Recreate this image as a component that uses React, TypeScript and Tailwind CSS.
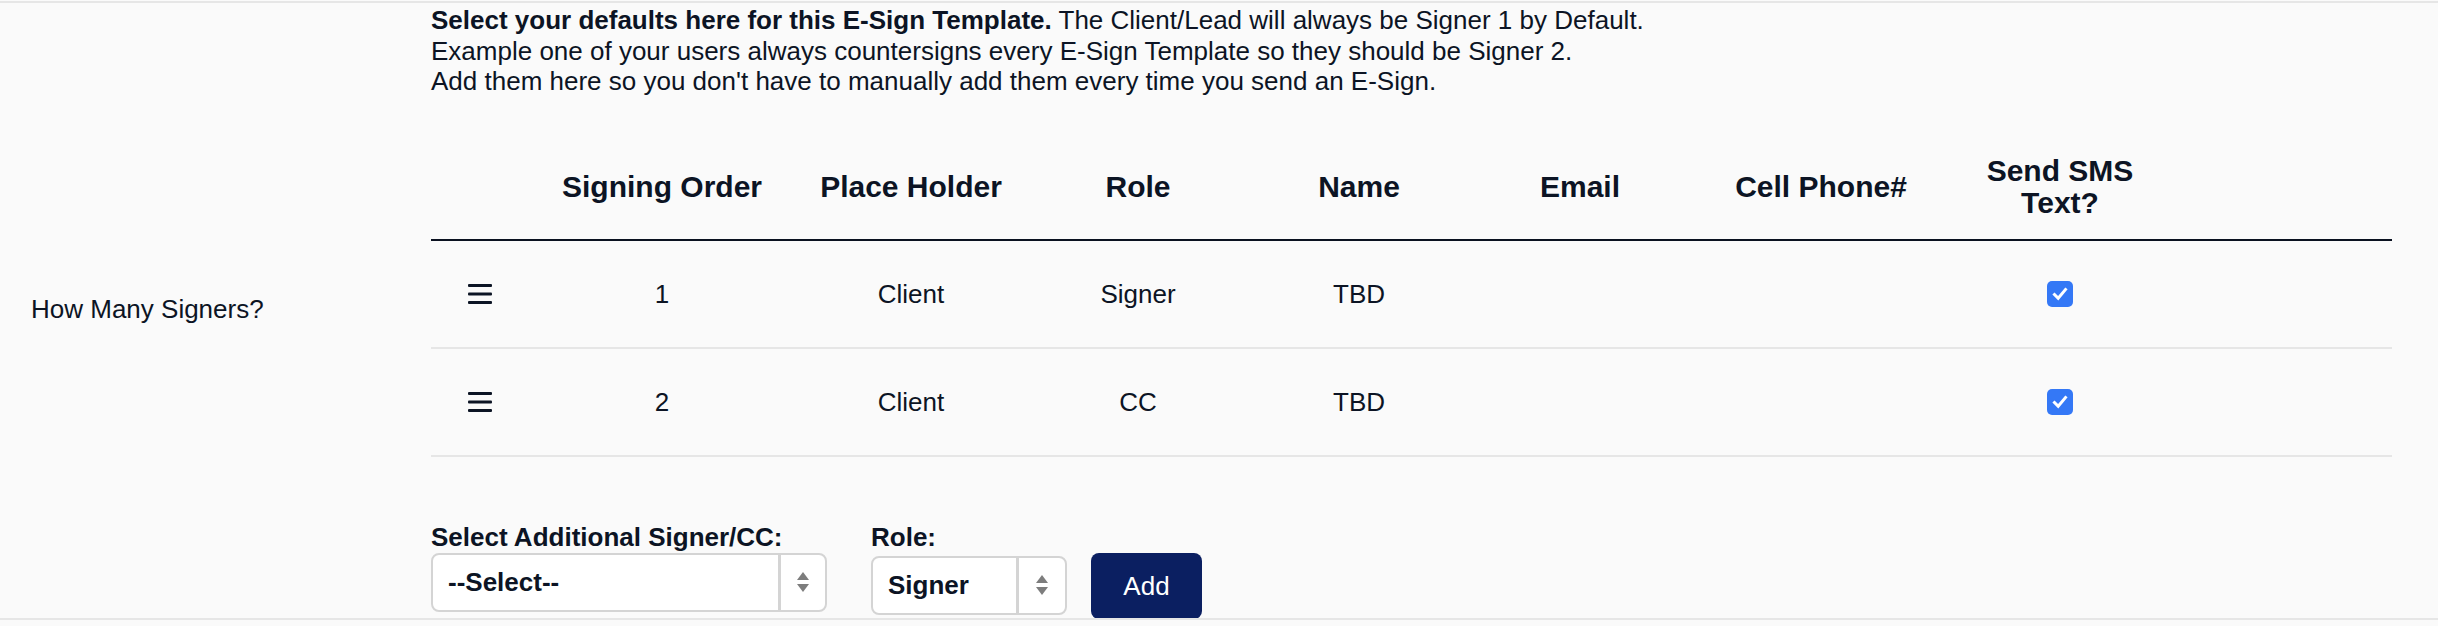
import React from "react";

const TEXT = "text-[#0c1424]";

function DragIcon() {
  return (
    <svg width="24" height="20" viewBox="0 0 24 20" aria-hidden="true">
      <rect x="0" y="0" width="24" height="3" rx="1" fill="#0c1424" />
      <rect x="0" y="8.5" width="24" height="3" rx="1" fill="#0c1424" />
      <rect x="0" y="17" width="24" height="3" rx="1" fill="#0c1424" />
    </svg>
  );
}

function CheckBox() {
  return (
    <div className="w-[26px] h-[26px] rounded-[5px] bg-[#3478f6] flex items-center justify-center">
      <svg width="18" height="18" viewBox="0 0 18 18" aria-hidden="true">
        <path d="M3.5 9.5 L7.2 13.2 L14.5 4.5" stroke="#ffffff" strokeWidth="3" fill="none" strokeLinecap="square" />
      </svg>
    </div>
  );
}

function Arrows() {
  return (
    <svg width="14" height="26" viewBox="0 0 14 26" aria-hidden="true">
      <path d="M7 3 L13 11 L1 11 Z" fill="#7d7d7d" />
      <path d="M7 23 L13 15 L1 15 Z" fill="#7d7d7d" />
    </svg>
  );
}

function FakeSelect({ label, width, right }: { label: string; width: string; right: string }) {
  return (
    <div className={`${width} h-[59px] bg-white border-2 border-[#d4d4d4] rounded-[8px] flex items-stretch`}>
      <div className={`flex-1 flex items-center pl-[15px] font-bold text-[26px] ${TEXT}`}>{label}</div>
      <div className={`${right} border-l-[3px] border-[#d4d4d4] flex items-center justify-center`}>
        <Arrows />
      </div>
    </div>
  );
}

const cols = "grid grid-cols-[98px_266px_232px_222px_220px_222px_260px_218px_1fr]";

const rows = [
  { order: "1", place: "Client", role: "Signer", name: "TBD" },
  { order: "2", place: "Client", role: "CC", name: "TBD" },
];

export default function App() {
  return (
    <div
      className={`w-[2438px] h-[626px] bg-[#fafafa] ${TEXT} text-[26px] leading-[30px] pt-px`}
      style={{ fontFamily: '"Liberation Sans", Arial, Helvetica, sans-serif' }}
    >
      <div className="border-t-2 border-b-2 border-[#e6e6e6] flex h-[619px] overflow-hidden">
        <div className="w-[431px] shrink-0 pl-[31px] flex items-center pb-[4px]">
          <span>How Many Signers?</span>
        </div>
        <div className="flex-1 pr-[46px] pt-[2px] flex flex-col">
          <p className="leading-[30.5px]">
            <span className="font-bold">Select your defaults here for this E-Sign Template.</span> The Client/Lead will
            always be Signer 1 by Default.
            <br />
            Example one of your users always countersigns every E-Sign Template so they should be Signer 2.
            <br />
            Add them here so you don't have to manually add them every time you send an E-Sign.
          </p>

          <div className="mt-[38px]">
            <div className={`${cols} h-[106px] items-center text-center font-bold text-[30px] leading-[32px] border-b-2 border-[#0a1120]`}>
              <div />
              <div>Signing Order</div>
              <div>Place Holder</div>
              <div>Role</div>
              <div>Name</div>
              <div>Email</div>
              <div>Cell Phone#</div>
              <div>
                Send SMS
                <br />
                Text?
              </div>
              <div />
            </div>
            {rows.map((r) => (
              <div key={r.order} className={`${cols} h-[108px] items-center text-center border-b-2 border-[#e6e6e6]`}>
                <div className="flex justify-center">
                  <DragIcon />
                </div>
                <div>{r.order}</div>
                <div>{r.place}</div>
                <div>{r.role}</div>
                <div>{r.name}</div>
                <div />
                <div />
                <div className="flex justify-center">
                  <CheckBox />
                </div>
                <div />
              </div>
            ))}
          </div>

          <div className="mt-[65px] flex items-start">
            <div className="flex flex-col">
              <label className="font-bold">Select Additional Signer/CC:</label>
              <div className="mt-[1px]">
                <FakeSelect label="--Select--" width="w-[396px]" right="w-[47px]" />
              </div>
            </div>
            <div className="ml-[44px] flex flex-col">
              <label className="font-bold">Role:</label>
              <div className="mt-[4px]">
                <FakeSelect label="Signer" width="w-[196px]" right="w-[49px]" />
              </div>
            </div>
            <button className="ml-[24px] mt-[31px] w-[111px] h-[66px] rounded-[8px] bg-[#0b1f61] text-white text-[26px]">
              Add
            </button>
          </div>
        </div>
      </div>
    </div>
  );
}
